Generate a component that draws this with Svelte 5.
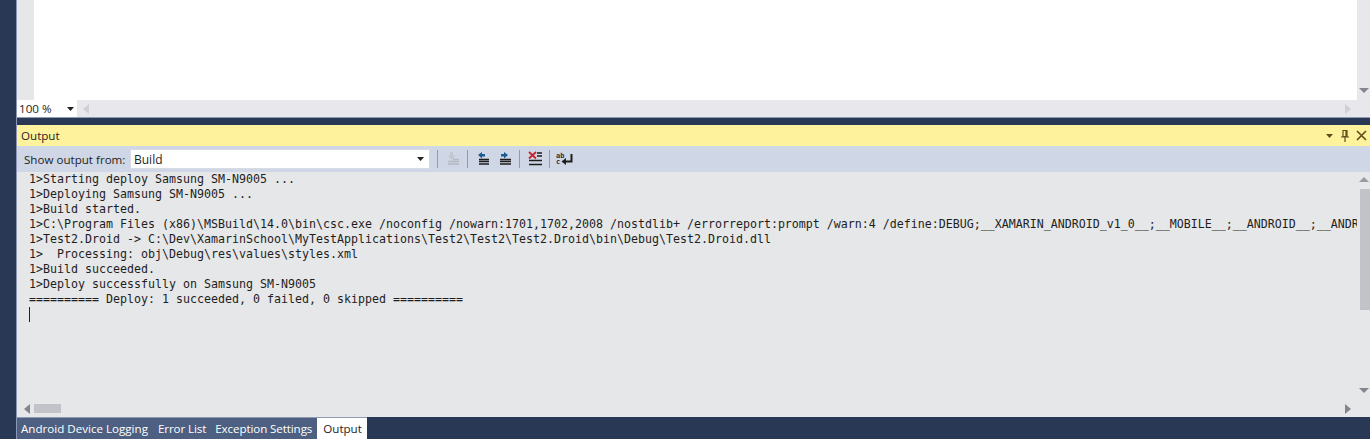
<script>
	const tabs = [
		{name: 'Android Device Logging'},
		{name: 'Error List'},
		{name: 'Exception Settings'},
		{name: 'Output', active: true}
	];
	const lines = [
		'1>Starting deploy Samsung SM-N9005 ...',
		'1>Deploying Samsung SM-N9005 ...',
		'1>Build started.',
		'1>C:\\Program Files (x86)\\MSBuild\\14.0\\bin\\csc.exe /noconfig /nowarn:1701,1702,2008 /nostdlib+ /errorreport:prompt /warn:4 /define:DEBUG;__XAMARIN_ANDROID_v1_0__;__MOBILE__;__ANDROID__;__ANDR',
		'1>Test2.Droid -> C:\\Dev\\XamarinSchool\\MyTestApplications\\Test2\\Test2\\Test2.Droid\\bin\\Debug\\Test2.Droid.dll',
		'1>  Processing: obj\\Debug\\res\\values\\styles.xml',
		'1>Build succeeded.',
		'1>Deploy successfully on Samsung SM-N9005',
		'========== Deploy: 1 succeeded, 0 failed, 0 skipped =========='
	];
</script>

<div class="shell">
	<div class="main">
		<section class="editor">
			<div class="editorTop">
				<div class="gutter"></div>
				<div class="page"></div>
				<div class="vbar downEnd">
					<svg class="arrow" width="13" height="10" viewBox="0 0 13 10"><path d="M2 2h10L7 7z" fill="#84848f"/></svg>
				</div>
			</div>
			<div class="editorBottom">
				<div class="zoomBox">
					<span>100 %</span>
					<svg width="7" height="4" viewBox="0 0 7 4"><path d="M0 0h7L3.500 4z" fill="#222"/></svg>
				</div>
				<svg class="leftArrow" width="8" height="12" viewBox="0 0 8 12"><path d="M7 1v10L1 6z" fill="#cfd0d6"/></svg>
				<div class="spacer"></div>
				<svg class="rightArrow" width="8" height="12" viewBox="0 0 8 12"><path d="M1 1v10l6-5z" fill="#cfd0d6"/></svg>
			</div>
		</section>

		<section class="output">
			<header class="title">
				<span>Output</span>
				<div class="titleBtns">
					<svg width="9" height="6" viewBox="0 0 9 6"><path d="M1 1h7L4.500 5z" fill="#5f4f1c"/></svg>
					<svg width="10" height="14" viewBox="0 0 10 14"><path d="M3 1.500h4v6H3zM6 1.500v6M1 8h8M5 8v5" fill="none" stroke="#5f4f1c" stroke-width="1.200"/></svg>
					<svg width="11" height="11" viewBox="0 0 11 11"><path d="M1 1l9 9M10 1l-9 9" fill="none" stroke="#5f4f1c" stroke-width="1.700"/></svg>
				</div>
			</header>

			<div class="toolbar">
				<span class="showFrom">Show output from:</span>
				<div class="combo">
					<span>Build</span>
					<svg width="7" height="4" viewBox="0 0 7 4"><path d="M0 0h7L3.500 4z" fill="#222"/></svg>
				</div>
				<i class="sep"></i>
				<svg class="tool" width="16" height="16" viewBox="0 0 16 16">
					<path d="M5 1h3v3.500h2.500L6.500 9l-4-4.500H5z" fill="#c3c8d0"/>
					<path d="M8 8.500h6M3 10.500h11M3 13h11" stroke="#b4b9c2" stroke-width="1.300"/>
				</svg>
				<i class="sep"></i>
				<svg class="tool" width="16" height="16" viewBox="0 0 16 16">
					<path d="M3 4l4-3v2h3v2.500H7V7.500z" fill="#1c5c93"/>
					<path d="M4 8.500h10M4 10.500h10M4 13h10" stroke="#1e1e1e" stroke-width="1.300"/>
				</svg>
				<svg class="tool" width="16" height="16" viewBox="0 0 16 16">
					<path d="M11 4L7 1v2H4v2.500h3V7.500z" fill="#1c5c93"/>
					<path d="M3 8.500h11M3 10.500h11M3 13h11" stroke="#1e1e1e" stroke-width="1.300"/>
				</svg>
				<i class="sep"></i>
				<svg class="tool" width="16" height="16" viewBox="0 0 16 16">
					<path d="M10 2h5M10 5h5M2 9.500h13M2 13.500h13" stroke="#1e1e1e" stroke-width="1.500"/>
					<path d="M2 1l7 6.500M9 1L2 7.500" stroke="#c5262a" stroke-width="1.800"/>
				</svg>
				<i class="sep"></i>
				<svg class="tool wide" width="18" height="16" viewBox="0 0 18 16">
					<text class="glyph" x="0" y="6.500">ab</text>
					<text class="glyph" x="0" y="13">c</text>
					<path d="M15.500 3v7.500H9" fill="none" stroke="#1e1e1e" stroke-width="2"/>
					<path d="M10 7l-4.500 3.500L10 14z" fill="#1e1e1e"/>
				</svg>
			</div>

			<div class="body">
				<div class="log">
					<pre>{lines.join('\n')}</pre>
					<div class="caret"></div>
				</div>
				<div class="vbar logBar">
					<svg class="arrow" width="13" height="10" viewBox="0 0 13 10"><path d="M7 2l5 5H2z" fill="#9a9aa2"/></svg>
					<div class="thumb"></div>
					<div class="spacer"></div>
					<svg class="arrow" width="13" height="10" viewBox="0 0 13 10"><path d="M2 2h10L7 7z" fill="#84848f"/></svg>
				</div>
				<div class="hbar">
					<svg width="8" height="12" viewBox="0 0 8 12"><path d="M7 1v10L1 6z" fill="#84848f"/></svg>
					<div class="hthumb"></div>
					<div class="spacer"></div>
					<svg width="8" height="12" viewBox="0 0 8 12"><path d="M1 1v10l6-5z" fill="#84848f"/></svg>
				</div>
				<div class="corner"></div>
			</div>
		</section>

		<nav class="tabs">
			{#each tabs as tab}
				<span class="tab" class:active={tab.active}>{tab.name}</span>
			{/each}
		</nav>
	</div>
</div>

<style>
	:global(body) {
		margin: 0;
		background: #293955;
	}
	.shell {
		width: 1370px;
		height: 439px;
		overflow: hidden;
		padding-left: 16px;
		box-sizing: border-box;
		background: #293955;
		font-family: "Open Sans", "Noto Sans", sans-serif;
		font-size: 11.600px;
		color: #1e1e1e;
	}
	.main {
		display: flex;
		flex-direction: column;
		height: 100%;
		border-left: 1px solid #8e96b8;
	}
	.editor {
		height: 117px;
		display: flex;
		flex-direction: column;
		flex: none;
		border-bottom: 1px solid #8f9ab3;
	}
	.editorTop {
		display: flex;
		height: 100px;
		flex: none;
	}
	.gutter {
		width: 17px;
		background: #e6e7e8;
	}
	.page {
		flex: 1;
		background: #fff;
	}
	.vbar {
		width: 13px;
		flex: none;
		background: #e8e8ec;
		display: flex;
		flex-direction: column;
		justify-content: flex-end;
	}
	.downEnd {
		padding-bottom: 4px;
		box-sizing: border-box;
	}
	.arrow {
		display: block;
		flex: none;
	}
	.editorBottom {
		flex: 1;
		display: flex;
		align-items: center;
		background: #e8e8ec;
	}
	.zoomBox {
		width: 60px;
		height: 17px;
		box-sizing: border-box;
		background: #fff;
		display: flex;
		align-items: center;
		justify-content: space-between;
		padding: 0 3px 0 2px;
		flex: none;
	}
	.leftArrow {
		margin-left: 5px;
	}
	.rightArrow {
		margin-right: 18px;
	}
	.spacer {
		flex: 1;
	}
	.output {
		margin-top: 7px;
		flex: 1;
		display: flex;
		flex-direction: column;
		min-height: 0;
	}
	.title {
		height: 21px;
		flex: none;
		background: #fff29d;
		display: flex;
		align-items: center;
		justify-content: space-between;
		padding: 0 3px 0 4px;
	}
	.titleBtns {
		display: flex;
		align-items: center;
		gap: 6px;
	}
	.titleBtns svg {
		display: block;
	}
	.toolbar {
		height: 26px;
		flex: none;
		background: #cfd6e5;
		display: flex;
		align-items: center;
		padding-left: 7px;
	}
	.showFrom {
		width: 106px;
		flex: none;
	}
	.combo {
		width: 300px;
		height: 20px;
		box-sizing: border-box;
		background: #fff;
		border: 1px solid #d6dbe6;
		display: flex;
		align-items: center;
		justify-content: space-between;
		padding: 0 5px 0 3px;
		margin-right: 3.500px;
		flex: none;
		font-size: 12px;
	}
	.sep {
		width: 1px;
		height: 18px;
		background: #8e9bb3;
		margin: 0 3.500px;
		flex: none;
	}
	.tool {
		flex: none;
		margin: 0 3px;
	}
	.wide {
		margin: 0 2px;
	}
	.glyph {
		font-family: "DejaVu Sans Mono", monospace;
		font-size: 7px;
		font-weight: 700;
		fill: #333;
	}
	.body {
		flex: 1;
		display: grid;
		grid-template-columns: 1fr 13px;
		grid-template-rows: 1fr 17px;
		background: #e6e7e8;
		min-height: 0;
	}
	.log {
		overflow: hidden;
		padding: 0 0 0 12px;
		min-width: 0;
	}
	pre {
		margin: 0;
		font-family: "DejaVu Sans Mono", "Liberation Mono", monospace;
		font-size: 11.630px;
		line-height: 15px;
		color: #1e1e1e;
		white-space: pre;
	}
	.caret {
		width: 1px;
		height: 15px;
		background: #222;
	}
	.logBar {
		background: #e6e7e8;
		justify-content: flex-start;
		padding: 3px 0 4px;
		box-sizing: border-box;
	}
	.thumb {
		width: 10px;
		height: 121px;
		margin: 4px 0 0 3px;
		background: #c2c3c9;
		flex: none;
	}
	.hbar {
		display: flex;
		align-items: center;
		padding: 0 5px 0 6px;
		min-width: 0;
	}
	.hthumb {
		width: 27px;
		height: 9px;
		margin-left: 3px;
		background: #c2c3c9;
	}
	.tabs {
		height: 21px;
		flex: none;
		display: flex;
		border-top: 1px solid #8f9ab3;
		margin-right: auto;
		background: #4d6082;
		color: #fff;
	}
	.tab {
		display: flex;
		align-items: center;
		padding: 0 5px 0 4px;
		letter-spacing: -0.100px;
	}
	.tab:first-child {
		padding-right: 6px;
		letter-spacing: 0;
	}
	.tab.active {
		background: #fff;
		color: #1e1e1e;
		padding: 0 5px 0 6px;
		letter-spacing: 0;
	}
</style>
